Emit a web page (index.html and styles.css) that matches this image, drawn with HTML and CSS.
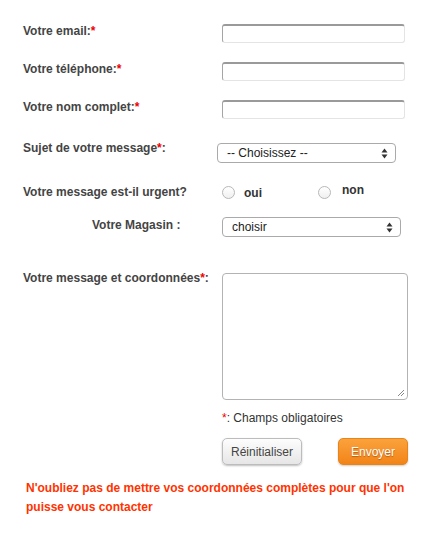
FILE: index.html
```html
<!DOCTYPE html>
<html lang="fr">
<head>
<meta charset="utf-8">
<title>Contact</title>
<link rel="stylesheet" href="styles.css">
</head>
<body>
<form class="form">
  <div class="row row-first">
    <label class="label">Votre email:<span class="req">*</span></label>
    <span class="input"></span>
  </div>
  <div class="row row-text">
    <label class="label">Votre téléphone:<span class="req">*</span></label>
    <span class="input"></span>
  </div>
  <div class="row row-text">
    <label class="label">Votre nom complet:<span class="req">*</span></label>
    <span class="input"></span>
  </div>
  <div class="row row-subject">
    <label class="label">Sujet de votre message<span class="req">*</span>:</label>
    <div class="select select-subject">
      <span>-- Choisissez --</span>
      <svg class="arrows" width="7" height="11" viewBox="0 0 7 11"><path d="M3.5 0.5 L6.5 4.5 H0.5 Z M3.5 10.5 L6.5 6.5 H0.5 Z" fill="#333"/></svg>
    </div>
  </div>
  <div class="row row-radio">
    <label class="label">Votre message est-il urgent?</label>
    <div class="radios">
      <span class="radio-item radio-oui"><span class="radio"></span><span class="radio-text">oui</span></span>
      <span class="radio-item radio-non"><span class="radio"></span><span class="radio-text">non</span></span>
    </div>
  </div>
  <div class="row row-shop">
    <label class="label label-shop">Votre Magasin :</label>
    <div class="select select-shop">
      <span>choisir</span>
      <svg class="arrows" width="7" height="11" viewBox="0 0 7 11"><path d="M3.5 0.5 L6.5 4.5 H0.5 Z M3.5 10.5 L6.5 6.5 H0.5 Z" fill="#333"/></svg>
    </div>
  </div>
  <div class="row row-message">
    <label class="label">Votre message et coordonnées<span class="req">*</span>:</label>
    <div class="textarea">
      <svg class="grip" width="8" height="8" viewBox="0 0 8 8"><path d="M7 1 L1 7 M7 4 L4 7" stroke="#888" stroke-width="1"/></svg>
    </div>
  </div>
  <div class="note"><span class="req">*</span>: Champs obligatoires</div>
  <div class="buttons">
    <button type="button" class="btn btn-reset">Réinitialiser</button>
    <button type="button" class="btn btn-send">Envoyer</button>
  </div>
  <p class="warning">N'oubliez pas de mettre vos coordonnées complètes pour que l'on puisse vous contacter</p>
</form>
</body>
</html>
```
FILE: styles.css
```css
html, body {
  margin: 0;
  padding: 0;
  background: #fff;
}
body {
  font-family: "Liberation Sans", Arial, sans-serif;
  font-size: 12px;
  color: #444;
}
.form {
  padding: 24px 0 0 23px;
  width: 400px;
}
.row {
  display: flex;
  align-items: flex-start;
}
.label {
  width: 199px;
  flex: none;
  font-weight: bold;
  line-height: 14px;
  color: #444;
}
.req {
  color: #e00;
}
.row-text {
  margin-top: 19px;
}
.input {
  display: block;
  width: 183px;
  height: 19px;
  box-sizing: border-box;
  border: 1px solid #e4e4e4;
  border-top: 2px solid #9a9a9a;
  border-left: 1px solid #a5a5a5;
  border-radius: 3px;
  background: #fff;
}
.row-subject {
  margin-top: 22px;
}
.select {
  box-sizing: border-box;
  height: 20px;
  border: 1px solid #aaa;
  border-radius: 4px;
  background: #fff;
  display: flex;
  align-items: center;
  justify-content: space-between;
  color: #222;
  font-size: 12px;
  padding: 0 7px 0 9px;
}
.select-subject {
  margin-top: 2px;
  margin-left: -5px;
  width: 179px;
}
.select-shop {
  width: 179px;
}
.arrows {
  display: block;
}
.row-radio {
  margin-top: 22px;
}
.radios {
  display: flex;
  align-items: center;
  height: 14px;
}
.radio-item {
  display: flex;
  align-items: center;
}
.radio-non {
  margin-left: 56px;
}
.radio {
  display: block;
  width: 13px;
  height: 13px;
  box-sizing: border-box;
  border: 1px solid #b8b8b8;
  border-radius: 50%;
  background: linear-gradient(#fff, #f0f0f0);
}
.radio-text {
  font-weight: bold;
  color: #333;
  margin-left: 9px;
  line-height: 14px;
  position: relative;
}
.radio-oui .radio-text {
  top: 1px;
}
.radio-non .radio-text {
  margin-left: 11px;
  top: -2px;
}
.row-shop {
  margin-top: 18px;
}
.label-shop {
  padding-left: 69px;
  box-sizing: border-box;
  margin-top: 1px;
}
.row-message {
  margin-top: 34px;
}
.textarea {
  position: relative;
  margin-top: 2px;
  width: 186px;
  height: 127px;
  box-sizing: border-box;
  border: 1px solid #b3b3b3;
  border-radius: 4px;
  background: #fff;
}
.grip {
  position: absolute;
  right: 2px;
  bottom: 2px;
}
.note {
  margin: 11px 0 0 199px;
  line-height: 14px;
  color: #333;
}
.buttons {
  margin: 13px 0 0 199px;
  display: flex;
  gap: 36px;
}
.btn {
  font-family: "Liberation Sans", Arial, sans-serif;
  font-size: 12px;
  height: 27px;
  border-radius: 5px;
  padding: 0;
  cursor: pointer;
}
.btn-reset {
  width: 80px;
  border: 1px solid #bcbcbc;
  color: #444;
  background: linear-gradient(#fdfdfd, #e6e6e6);
  box-shadow: 0 1px 2px rgba(0,0,0,0.25);
}
.btn-send {
  width: 70px;
  border: 1px solid #e98419;
  color: #fff;
  background: linear-gradient(#fba23c, #f28418);
  text-shadow: 0 1px 1px rgba(120,50,0,0.5);
  box-shadow: 0 1px 2px rgba(0,0,0,0.2);
}
.warning {
  margin: 14px 0 0 3px;
  width: 390px;
  color: #ff3300;
  font-weight: bold;
  line-height: 19px;
}
```
